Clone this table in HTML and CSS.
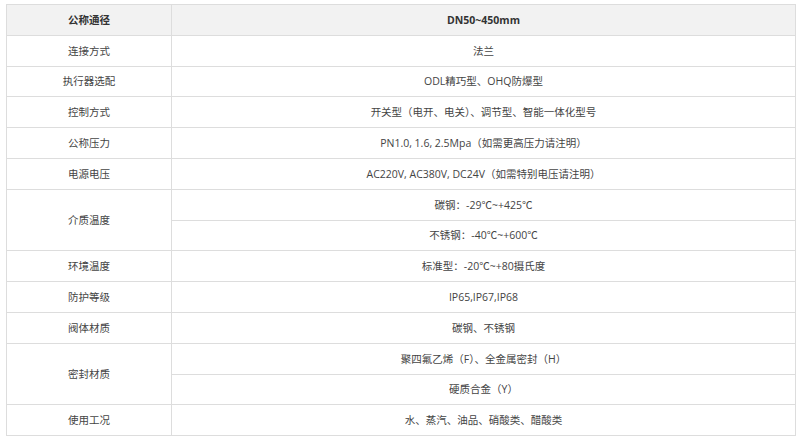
FILE: index.html
```html
<!DOCTYPE html>
<html lang="zh-CN">
<head>
<meta charset="utf-8">
<link rel="stylesheet" href="styles.css">
</head>
<body>
<table class="spec">
  <colgroup><col class="c1"><col class="c2"></colgroup>
  <tr class="head"><td>公称通径</td><td>DN50~450mm</td></tr>
  <tr><td>连接方式</td><td>法兰</td></tr>
  <tr><td>执行器选配</td><td>ODL精巧型、OHQ防爆型</td></tr>
  <tr><td>控制方式</td><td>开关型（电开、电关）、调节型、智能一体化型号</td></tr>
  <tr><td>公称压力</td><td>PN1.0, 1.6, 2.5Mpa（如需更高压力请注明）</td></tr>
  <tr><td>电源电压</td><td>AC220V, AC380V, DC24V（如需特别电压请注明）</td></tr>
  <tr><td rowspan="2">介质温度</td><td>碳钢：-29℃~+425℃</td></tr>
  <tr><td>不锈钢：-40℃~+600℃</td></tr>
  <tr><td>环境温度</td><td>标准型：-20℃~+80摄氏度</td></tr>
  <tr><td>防护等级</td><td>IP65,IP67,IP68</td></tr>
  <tr><td>阀体材质</td><td>碳钢、不锈钢</td></tr>
  <tr><td rowspan="2">密封材质</td><td>聚四氟乙烯（F）、全金属密封（H）</td></tr>
  <tr><td>硬质合金（Y）</td></tr>
  <tr><td>使用工况</td><td>水、蒸汽、油品、硝酸类、醋酸类</td></tr>
</table>
</body>
</html>
```
FILE: styles.css
```css
html, body {
  margin: 0;
  padding: 0;
  background: #ffffff;
}
body {
  padding: 4px 0 0 6px;
  font-family: "Open Sans", "Noto Sans CJK SC", sans-serif;
  font-size: 10.5px;
  color: #444444;
}
.spec {
  border-collapse: collapse;
  width: 790px;
  table-layout: fixed;
}
.spec .c1 { width: 165px; }
.spec td {
  border: 1px solid #dddddd;
  text-align: center;
  vertical-align: middle;
  height: 29.8px;
  padding: 0;
  line-height: 14px;
  box-sizing: border-box;
}
.spec tr { height: 30.8px; }
.spec .head td {
  background: #f2f2f2;
  font-weight: bold;
  color: #333333;
}
```
